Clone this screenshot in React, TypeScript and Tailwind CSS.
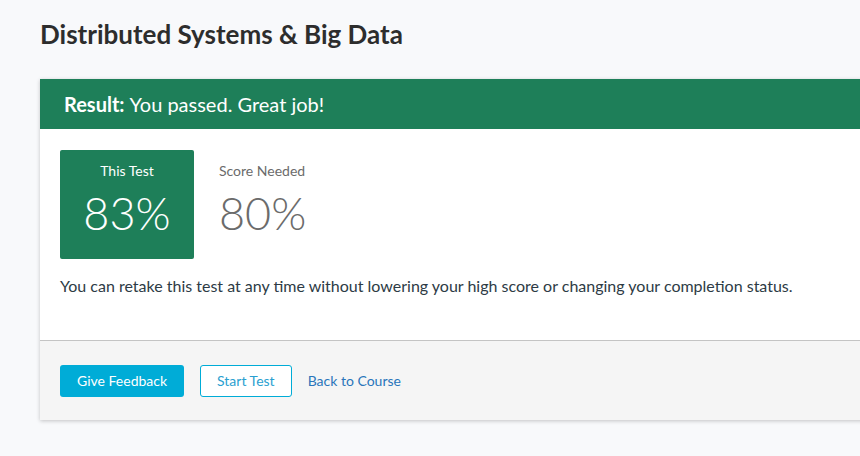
export default function App() {
  return (
    <div className="h-[456px] w-[860px] overflow-hidden bg-[#f8f9fb] font-['Lato','Liberation_Sans',sans-serif]">
      {/* Page title */}
      <h1 className="pl-10 pt-[18px] text-[26px] font-bold leading-[32px] text-[#2d2d2d]">
        Distributed Systems &amp; Big Data
      </h1>

      {/* Result card */}
      <div className="ml-10 mt-[29px] w-[900px] bg-white shadow-[0_1px_4px_rgba(0,0,0,0.22)]">
        <div className="flex h-[50px] items-center bg-[#1e7f59] pl-6 text-[20px] text-white">
          <span className="font-bold">Result:</span>
          <span className="ml-[5px]">You passed. Great job!</span>
        </div>

        <div className="h-[211px] px-5 pt-[21px]">
          <div className="flex gap-[25px]">
            <div className="flex h-[109px] w-[134px] flex-col items-center rounded-[2px] bg-[#1e7f59] pt-[12px] text-white">
              <span className="text-[14px] leading-[18px]">This Test</span>
              <span className="mt-[7px] text-[45px] font-light leading-[52px]">83%</span>
            </div>
            <div className="flex flex-col pt-[12px] text-[#6b6b6b]">
              <span className="text-[14px] leading-[18px]">Score Needed</span>
              <span className="mt-[7px] text-[45px] font-light leading-[52px]">80%</span>
            </div>
          </div>
          <p className="mt-[17px] text-[16px] leading-[20px] text-[#2d3b45]">
            You can retake this test at any time without lowering your high score or changing your completion status.
          </p>
        </div>

        <div className="flex h-[80px] items-center gap-4 border-t border-[#c4c4c4] bg-[#f5f5f5] pl-5">
          <button className="h-[32px] rounded-[3px] bg-[#00acd7] px-[17px] text-[14px] text-white">
            Give Feedback
          </button>
          <button className="h-[32px] rounded-[3px] border border-[#00acd7] bg-white px-4 text-[14px] text-[#2a9fd0]">
            Start Test
          </button>
          <a className="text-[14px] text-[#2a75bb]" href="#">
            Back to Course
          </a>
        </div>
      </div>
    </div>
  );
}
